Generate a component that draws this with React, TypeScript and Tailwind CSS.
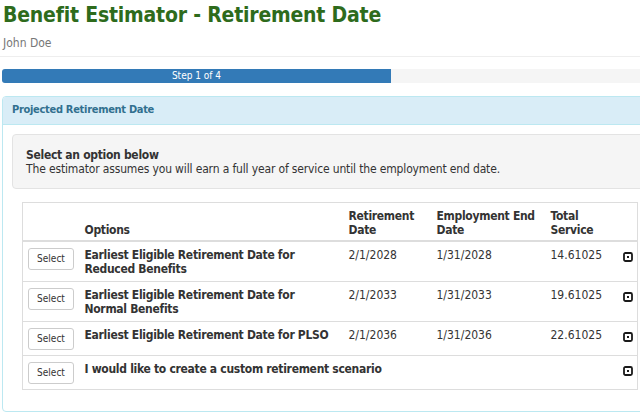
import React from "react";

const rows = [
  { label: ["Earliest Eligible Retirement Date for", "Reduced Benefits"], ret: "2/1/2028", end: "1/31/2028", total: "14.61025" },
  { label: ["Earliest Eligible Retirement Date for", "Normal Benefits"], ret: "2/1/2033", end: "1/31/2033", total: "19.61025" },
  { label: ["Earliest Eligible Retirement Date for PLSO"], ret: "2/1/2036", end: "1/31/2036", total: "22.61025" },
];

function Toggle() {
  return (
    <svg width="10" height="10" viewBox="0 0 10 10" className="block">
      <rect x="1" y="1" width="8" height="8" rx="1.5" fill="none" stroke="#1a1a1a" strokeWidth="1.8" />
      <rect x="4" y="4" width="2" height="2" fill="#1a1a1a" />
    </svg>
  );
}

function SelectBtn() {
  return (
    <button className="mt-[1px] h-[22px] w-[46px] border border-[#ccc] rounded-[3px] bg-white text-[10px] leading-[20px] text-[#333]">
      Select
    </button>
  );
}

export default function App() {
  return (
    <div
      className="w-[640px] h-[420px] overflow-hidden bg-white"
      style={{ fontFamily: "'DejaVu Sans Condensed', 'DejaVu Sans', sans-serif" }}
    >
      <div className="px-[3px] pt-[2px]">
        <h1 className="text-[21px] leading-[26px] tracking-[-0.2px] font-bold text-[#2e6b1c] m-0">
          Benefit Estimator - Retirement Date
        </h1>
        <div className="mt-[8px] text-[12px] leading-[14px] text-[#777]">John Doe</div>
      </div>
      <div className="mt-[6px] border-t border-[#eee]" />
      <div className="mt-[12px] ml-[2px] h-[14px] flex bg-[#f5f5f5] rounded-l-[3px] overflow-hidden">
        <div className="w-[389px] h-full bg-[#337ab7] text-white text-[10px] leading-[14px] text-center">
          Step 1 of 4
        </div>
      </div>
      <div className="mt-[13px] ml-[2px] w-[660px] border border-[#bce8f1] rounded-[4px] overflow-hidden">
        <div className="h-[28px] bg-[#d9edf7] border-b border-[#bce8f1] px-[9px] flex items-center text-[11px] tracking-[-0.3px] font-bold text-[#31708f]">
          Projected Retirement Date
        </div>
        <div className="px-[9px] pt-[9px] pb-[21px]">
          <div className="bg-[#f5f5f5] border border-[#e3e3e3] rounded-[4px] px-[13px] pt-[13px] pb-[12px] text-[12px] leading-[14px] text-[#333]">
            <div className="font-bold tracking-[-0.3px]">Select an option below</div>
            <div className="tracking-[-0.15px]">
              The estimator assumes you will earn a full year of service until the employment end date.
            </div>
          </div>
          <table className="mt-[13px] ml-[10px] w-[615px] border border-[#ddd] border-collapse text-[12px] leading-[14px] text-[#333] table-fixed">
            <colgroup>
              <col className="w-[56px]" />
              <col className="w-[264px]" />
              <col className="w-[88px]" />
              <col className="w-[114px]" />
              <col className="w-[68px]" />
              <col className="w-[25px]" />
            </colgroup>
            <thead>
              <tr className="border-b-2 border-[#ddd] font-bold tracking-[-0.3px]">
                <th className="p-[5px]" />
                <th className="px-[6px] pt-[6px] pb-[3px] text-left align-bottom">Options</th>
                <th className="px-[6px] pt-[6px] pb-[3px] text-left align-bottom whitespace-nowrap">
                  Retirement
                  <br />
                  Date
                </th>
                <th className="px-[6px] pt-[6px] pb-[3px] text-left align-bottom whitespace-nowrap">
                  Employment End
                  <br />
                  Date
                </th>
                <th className="px-[6px] pt-[6px] pb-[3px] text-left align-bottom whitespace-nowrap">
                  Total
                  <br />
                  Service
                </th>
                <th />
              </tr>
            </thead>
            <tbody>
              {rows.map((r, i) => (
                <tr key={i} className="border-t border-[#ddd]">
                  <td className="px-[5px] pt-[5px] pb-[5px] align-top">
                    <SelectBtn />
                  </td>
                  <td className="px-[6px] pt-[6px] pb-[5px] align-top font-bold tracking-[-0.3px] whitespace-nowrap">
                    {r.label.map((l, j) => (
                      <div key={j}>{l}</div>
                    ))}
                  </td>
                  <td className="px-[6px] pt-[6px] pb-[5px] align-top">{r.ret}</td>
                  <td className="px-[6px] pt-[6px] pb-[5px] align-top">{r.end}</td>
                  <td className="px-[6px] pt-[6px] pb-[5px] align-top">{r.total}</td>
                  <td className="pl-[10px] pt-[10px] align-top">
                    <Toggle />
                  </td>
                </tr>
              ))}
              <tr className="border-t border-[#ddd]">
                <td className="px-[5px] pt-[5px] pb-[5px] align-top">
                  <SelectBtn />
                </td>
                <td colSpan={4} className="px-[6px] pt-[6px] pb-[5px] align-top font-bold tracking-[-0.3px] whitespace-nowrap">
                  I would like to create a custom retirement scenario
                </td>
                <td className="pl-[10px] pt-[10px] align-top">
                  <Toggle />
                </td>
              </tr>
            </tbody>
          </table>
        </div>
      </div>
    </div>
  );
}
